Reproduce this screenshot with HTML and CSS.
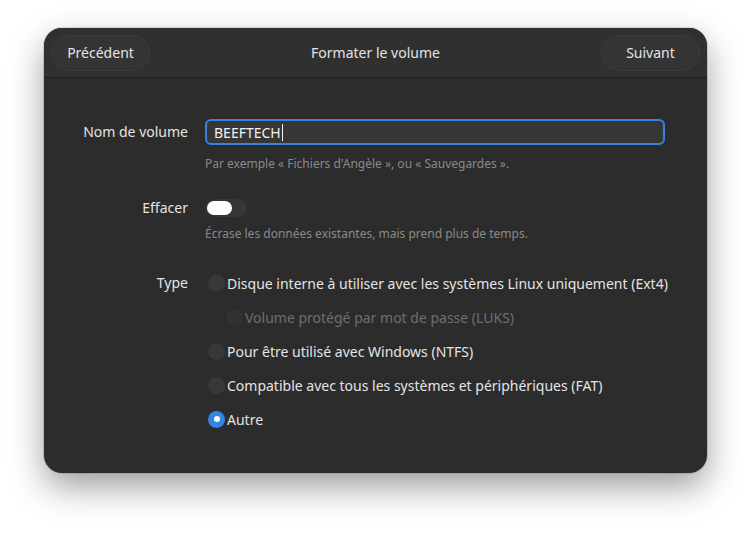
FILE: index.html
```html
<!DOCTYPE html>
<html lang="fr">
<head>
    <meta charset="UTF-8">
    <title>Formater le volume</title>
    <link rel="stylesheet" href="styles.css">
</head>
<body>
    <div class="window">
        <div class="headerbar">
            <button class="pill">Précédent</button>
            <span class="title">Formater le volume</span>
            <button class="pill">Suivant</button>
        </div>

        <div class="content">
            <div class="row">
                <label class="row-label" for="volume-name">Nom de volume</label>
                <div class="row-field">
                    <div class="entry">
                        <span id="volume-name">BEEFTECH</span><span class="caret"></span>
                    </div>
                    <p class="hint">Par exemple « Fichiers d'Angèle », ou « Sauvegardes ».</p>
                </div>
            </div>

            <div class="row row-erase">
                <span class="row-label">Effacer</span>
                <div class="row-field">
                    <span class="switch"><span class="knob"></span></span>
                    <p class="hint">Écrase les données existantes, mais prend plus de temps.</p>
                </div>
            </div>

            <div class="row row-type">
                <span class="row-label type-label">Type</span>
                <div class="row-field options">
                    <div class="option"><span class="radio"></span>Disque interne à utiliser avec les systèmes Linux uniquement (Ext4)</div>
                    <div class="option sub disabled"><span class="radio check"></span>Volume protégé par mot de passe (LUKS)</div>
                    <div class="option"><span class="radio"></span>Pour être utilisé avec Windows (NTFS)</div>
                    <div class="option"><span class="radio"></span>Compatible avec tous les systèmes et périphériques (FAT)</div>
                    <div class="option"><span class="radio checked"></span>Autre</div>
                </div>
            </div>
        </div>
    </div>
</body>
</html>
```

FILE: styles.css
```css
:root {
    --header-bg: #303030;
    --window-bg: #2c2c2c;
    --text-color: #e4e4e4;
    --dim-text: #8a8a8a;
    --accent: #3584e4;
}

* {
    margin: 0;
    padding: 0;
    box-sizing: border-box;
}

html,
body {
    min-height: 100%;
    height: 100%;
}

body {
    font-family: 'Noto Sans', sans-serif;
    font-size: 14px;
    background-color: #ffffff;
    color: var(--text-color);
    padding: 28px 0 0 44px;
}

.window {
    width: 663px;
    height: 445px;
    background-color: var(--window-bg);
    border-radius: 18px;
    overflow: hidden;
    box-shadow: 0 14px 34px rgba(0, 0, 0, 0.38), 0 0 0 1px rgba(0, 0, 0, 0.12);
}

/* Header bar */
.headerbar {
    display: flex;
    align-items: center;
    justify-content: space-between;
    height: 50px;
    padding: 0 7px;
    background-color: var(--header-bg);
    border-bottom: 1px solid #1e1e1e;
}

.pill {
    font: inherit;
    color: var(--text-color);
    background-color: #343434;
    border: 1px solid #3c3c3c;
    border-radius: 18px;
    height: 36px;
    width: 99px;
}

.title {
    color: var(--text-color);
}

/* Form */
.content {
    padding: 41px 42px 0 0;
}

.row {
    display: grid;
    grid-template-columns: 144px 1fr;
    column-gap: 17px;
}

.row-label {
    text-align: right;
    height: 26px;
    line-height: 26px;
}

.row-erase {
    margin-top: 27px;
}

.row-erase .row-label {
    height: 18px;
    line-height: 18px;
}

.row-type {
    margin-top: 24px;
}

.type-label {
    height: 34px;
    line-height: 34px;
}

.entry {
    display: flex;
    align-items: center;
    height: 26px;
    padding: 0 7px;
    background-color: #363636;
    border: 2px solid var(--accent);
    border-radius: 6px;
    color: #f2f2f2;
}

.caret {
    width: 1px;
    height: 17px;
    background-color: #f2f2f2;
    margin-left: 1px;
}

.hint {
    color: var(--dim-text);
    font-size: 12px;
    margin-top: 11px;
    line-height: 16px;
}

.row-erase .hint {
    margin-top: 9px;
}

/* Switch */
.switch {
    display: block;
    width: 42px;
    height: 18px;
    border-radius: 9px;
    background-color: #363636;
    padding: 2px;
}

.knob {
    display: block;
    width: 25px;
    height: 14px;
    border-radius: 7px;
    background-color: #ffffff;
}

/* Radio options */
.option {
    display: flex;
    align-items: center;
    height: 34px;
    white-space: nowrap;
}

.option.sub {
    padding-left: 18px;
}

.option.disabled {
    color: #6f6f6f;
}

.radio {
    width: 17px;
    height: 17px;
    margin: 0 2px 0 3px;
    border-radius: 50%;
    background-color: #383838;
    flex-shrink: 0;
}

.option.disabled .radio {
    background-color: #323232;
}

.radio.checked {
    background-color: var(--accent);
    position: relative;
}

.radio.checked:after {
    content: "";
    position: absolute;
    width: 6px;
    height: 6px;
    left: 5.5px;
    top: 5.5px;
    border-radius: 50%;
    background-color: #ffffff;
}
```
